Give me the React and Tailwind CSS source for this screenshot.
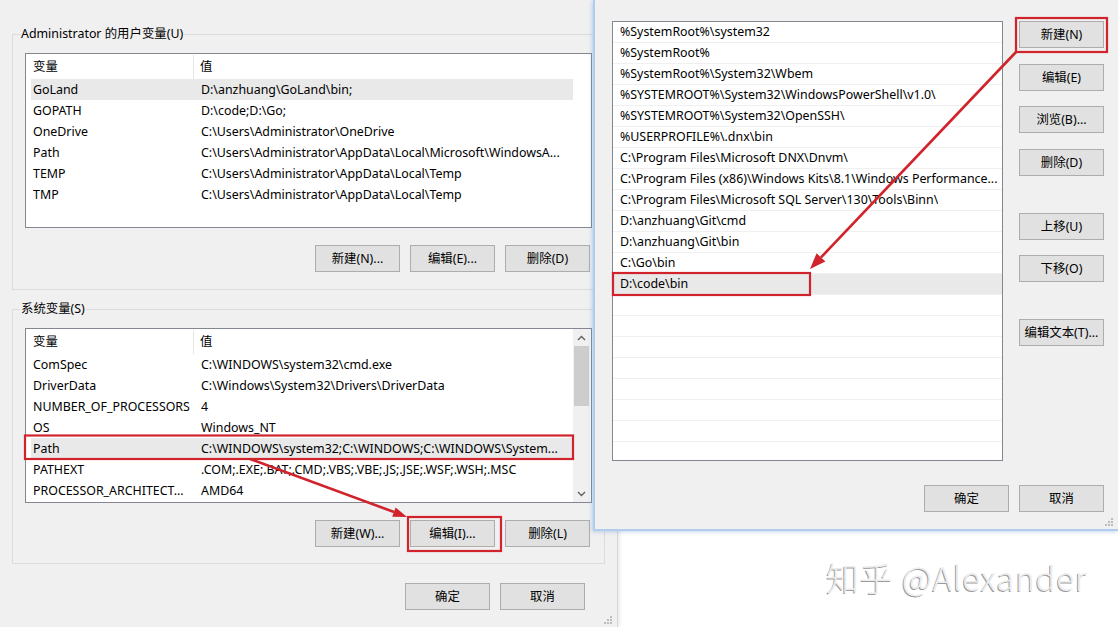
import React from 'react';

const userVars = [
  ['GoLand', 'D:\\anzhuang\\GoLand\\bin;'],
  ['GOPATH', 'D:\\code;D:\\Go;'],
  ['OneDrive', 'C:\\Users\\Administrator\\OneDrive'],
  ['Path', 'C:\\Users\\Administrator\\AppData\\Local\\Microsoft\\WindowsA...'],
  ['TEMP', 'C:\\Users\\Administrator\\AppData\\Local\\Temp'],
  ['TMP', 'C:\\Users\\Administrator\\AppData\\Local\\Temp'],
];

const sysVars = [
  ['ComSpec', 'C:\\WINDOWS\\system32\\cmd.exe'],
  ['DriverData', 'C:\\Windows\\System32\\Drivers\\DriverData'],
  ['NUMBER_OF_PROCESSORS', '4'],
  ['OS', 'Windows_NT'],
  ['Path', 'C:\\WINDOWS\\system32;C:\\WINDOWS;C:\\WINDOWS\\System...'],
  ['PATHEXT', '.COM;.EXE;.BAT;.CMD;.VBS;.VBE;.JS;.JSE;.WSF;.WSH;.MSC'],
  ['PROCESSOR_ARCHITECT...', 'AMD64'],
];

const paths = [
  '%SystemRoot%\\system32',
  '%SystemRoot%',
  '%SystemRoot%\\System32\\Wbem',
  '%SYSTEMROOT%\\System32\\WindowsPowerShell\\v1.0\\',
  '%SYSTEMROOT%\\System32\\OpenSSH\\',
  '%USERPROFILE%\\.dnx\\bin',
  'C:\\Program Files\\Microsoft DNX\\Dnvm\\',
  'C:\\Program Files (x86)\\Windows Kits\\8.1\\Windows Performance...',
  'C:\\Program Files\\Microsoft SQL Server\\130\\Tools\\Binn\\',
  'D:\\anzhuang\\Git\\cmd',
  'D:\\anzhuang\\Git\\bin',
  'C:\\Go\\bin',
  'D:\\code\\bin',
];

const Btn = ({ children, className = '' }) => (
  <div className={`flex h-[27px] w-[85px] shrink-0 items-center justify-center border border-[#adadad] bg-[#e1e1e1] pt-px text-[12.4px] text-black ${className}`}>
    {children}
  </div>
);

const Grip = ({ className = '' }) => (
  <svg className={className} width="10" height="10" viewBox="0 0 10 10">
    <rect x="7" y="1" width="2" height="2" fill="#bcbcbc" />
    <rect x="4" y="4" width="2" height="2" fill="#bcbcbc" />
    <rect x="7" y="4" width="2" height="2" fill="#bcbcbc" />
    <rect x="1" y="7" width="2" height="2" fill="#bcbcbc" />
    <rect x="4" y="7" width="2" height="2" fill="#bcbcbc" />
    <rect x="7" y="7" width="2" height="2" fill="#bcbcbc" />
  </svg>
);

const ScrollBar = () => (
  <div className="flex w-[17px] flex-col bg-[#f0f0f0]">
    <div className="flex h-[17px] items-center justify-center">
      <svg width="9" height="6" viewBox="0 0 9 6">
        <path d="M1 5 L4.5 1.5 L8 5" fill="none" stroke="#606060" strokeWidth="1.4" />
      </svg>
    </div>
    <div className="flex-1 px-px">
      <div className="h-[60px] bg-[#cdcdcd]" />
    </div>
    <div className="flex h-[17px] items-center justify-center">
      <svg width="9" height="6" viewBox="0 0 9 6">
        <path d="M1 1 L4.5 4.5 L8 1" fill="none" stroke="#606060" strokeWidth="1.4" />
      </svg>
    </div>
  </div>
);

const VarList = ({ rows, selected, scroll }) => (
  <div className="mt-[11px] flex h-[175px] w-[567px] border border-[#828790] bg-white">
    <div className="w-[547px] overflow-hidden">
      <div className="flex h-[25px] pt-px">
        <div className="flex w-[168px] items-center border-r border-[#e5e5e5] pl-[7px]">变量</div>
        <div className="flex items-center pl-[6px]">值</div>
      </div>
      {rows.map(([k, v], i) => (
        <div key={k} className="h-[21px] pl-[5px]">
          <div className={`flex h-full items-center pt-px ${i === selected ? 'bg-[#e9e9e9]' : ''}`}>
            <div className="w-[163px] overflow-hidden whitespace-nowrap pl-[2px]">{k}</div>
            <div className="min-w-0 flex-1 overflow-hidden whitespace-nowrap pl-[7px]">{v}</div>
          </div>
        </div>
      ))}
    </div>
    {scroll && <ScrollBar />}
  </div>
);

const Group = ({ title, children, className = '' }) => (
  <fieldset className={`w-[593px] border border-[#dcdcdc] px-[12px] ${className}`}>
    <legend className="-ml-[5px] px-px leading-[16px]">{title}</legend>
    {children}
  </fieldset>
);

const EnvDialog = () => (
  <div className="absolute left-0 top-0 h-[627px] w-[618px] border-r border-[#d6d6d6] bg-[#f0f0f0] pl-[12px] pt-[26px] shadow-[2px_0_3px_rgba(0,0,0,0.08)]">
    <Group title="Administrator 的用户变量(U)" className="pb-[17px]">
      <VarList rows={userVars} selected={0} />
      <div className="mt-[17px] flex justify-end gap-[10px] pr-[2px]">
        <Btn>新建(N)...</Btn>
        <Btn>编辑(E)...</Btn>
        <Btn>删除(D)</Btn>
      </div>
    </Group>
    <Group title="系统变量(S)" className="mt-[11px] pb-[16px]">
      <VarList rows={sysVars} selected={4} scroll />
      <div className="mt-[17px] flex justify-end gap-[10px] pr-[2px]">
        <Btn>新建(W)...</Btn>
        <Btn>编辑(I)...</Btn>
        <Btn>删除(L)</Btn>
      </div>
    </Group>
    <div className="mt-[19px] flex w-[593px] justify-end gap-[10px] pr-[20px]">
      <Btn>确定</Btn>
      <Btn>取消</Btn>
    </div>
    <Grip className="absolute bottom-[2px] right-[4px]" />
  </div>
);

const PathDialog = () => (
  <div className="absolute left-[593px] top-0 h-[531px] w-[525px] border-b-2 border-l-2 border-[#b0cdef] bg-[#f0f0f0] pl-[17px] pr-[14px] pt-[21px] shadow-[-1px_1px_4px_rgba(90,140,210,0.35)]">
    <div className="flex gap-[16px]">
      <div className="flex h-[440px] w-[391px] flex-col border border-[#828790] bg-white">
        {Array.from({ length: 20 }).map((_, i) => (
          <div
            key={i}
            className={`flex h-[21px] shrink-0 items-center border-b border-[#f0f0f0] pl-[7px] pr-[4px] pt-px ${i === 12 ? 'bg-[#e9e9e9]' : ''}`}
          >
            <span className="overflow-hidden whitespace-nowrap">{paths[i] || ''}</span>
          </div>
        ))}
        <div className="flex-1" />
      </div>
      <div className="flex flex-col">
        <Btn>新建(N)</Btn>
        <Btn className="mt-[16px]">编辑(E)</Btn>
        <Btn className="mt-[15px]">浏览(B)...</Btn>
        <Btn className="mt-[16px]">删除(D)</Btn>
        <Btn className="mt-[37px]">上移(U)</Btn>
        <Btn className="mt-[15px]">下移(O)</Btn>
        <Btn className="mt-[37px]">编辑文本(T)...</Btn>
      </div>
    </div>
    <div className="mt-[24px] flex justify-end gap-[10px]">
      <Btn>确定</Btn>
      <Btn>取消</Btn>
    </div>
    <Grip className="absolute bottom-[2px] right-[4px]" />
  </div>
);

const Annotations = () => (
  <svg className="pointer-events-none absolute left-0 top-0" width="1118" height="627" viewBox="0 0 1118 627">
    <g fill="none" stroke="#d0232b" strokeWidth="2.2">
      <rect x="25" y="435.5" width="548" height="23.5" />
      <rect x="408" y="517" width="93" height="34" />
      <rect x="1016" y="18" width="91" height="34" />
      <rect x="613" y="273" width="197" height="22" />
    </g>
    <g stroke="#d0232b" strokeWidth="2.6" fill="#d0232b">
      <line x1="250" y1="459" x2="394" y2="512" />
      <polygon points="407,517 392.2,516.8 395.6,507.4" stroke="none" />
      <line x1="1016" y1="52" x2="821" y2="257.4" />
      <polygon points="810,269 816.6,253.3 825.4,261.5" stroke="none" />
    </g>
  </svg>
);

export default function App() {
  return (
    <div className="relative h-[627px] w-[1118px] overflow-hidden bg-white font-['Noto_Sans','Noto_Sans_CJK_SC',sans-serif] text-[12.4px] text-black">
      <EnvDialog />
      <PathDialog />
      <div className="absolute left-[826px] top-[553px] whitespace-nowrap font-['Noto_Sans_CJK_SC',sans-serif] text-[33px] font-light tracking-[0.8px] text-[#ededed] [text-shadow:-1px_1px_0_#9c9c9c]">
        知乎 @Alexander
      </div>
      <Annotations />
    </div>
  );
}
